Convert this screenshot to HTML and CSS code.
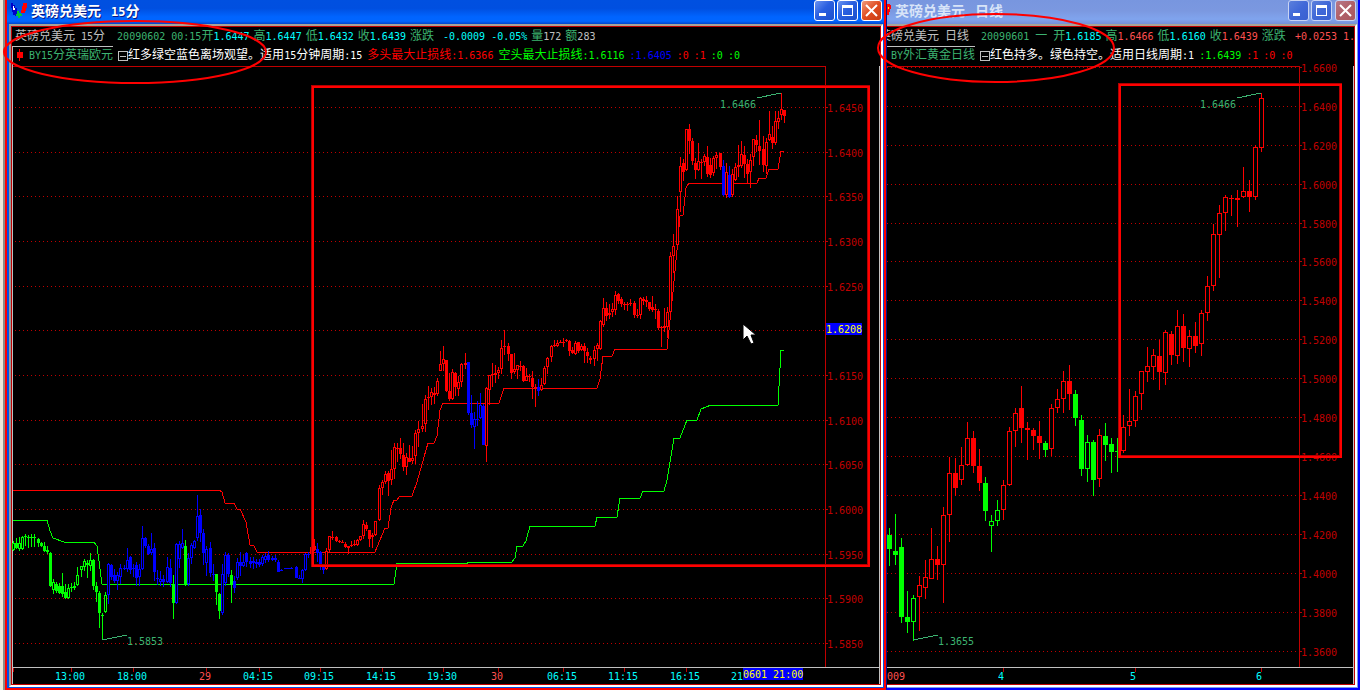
FILE: index.html
```html
<!DOCTYPE html>
<html lang="zh-CN">
<head>
<meta charset="utf-8">
<title>英磅兑美元</title>
<link rel="stylesheet" href="styles.css">
</head>
<body>
<main class="desktop">
  <div class="edge"></div>

  <section class="window window-active">
    <header class="titlebar">
      <svg class="app-icon" width="16" height="16" viewBox="0 0 16 16" shape-rendering="crispEdges">
        <path fill="#0000c8" d="M0 0h2v2h2v3h2v8H4v-1H2V9H1V5H0z"/>
        <path fill="#fff" d="M2 3h1v2h1v2H2zM11 4h1v2h2v2h-3z"/>
        <path fill="#f00" d="M12 0h2v-0h2v5h-1v3h-1v2h-4V7h1V3h1z"/>
        <path fill="#0c3" d="M6 8h2v2h2v1h1v2H9v2H7v-2H5v-2h1z"/>
      </svg>
      <h1 class="title"><span>英磅兑美元</span><span><span class="title-num">15</span>分</span></h1>
      <div class="controls">
        <button class="ctl" type="button" aria-label="最小化"><svg width="19" height="19" viewBox="0 0 19 19"><path fill="#fff" d="M4 12h7v3H4z"/></svg></button>
        <button class="ctl" type="button" aria-label="最大化"><svg width="19" height="19" viewBox="0 0 19 19"><path fill="#fff" fill-rule="evenodd" d="M4 4h11v11H4zM5 7v7h9V7z"/></svg></button>
        <button class="ctl ctl-close" type="button" aria-label="关闭"><svg width="19" height="19" viewBox="0 0 19 19"><path stroke="#fff" stroke-width="2" d="M4 4l11 11M15 4L4 15"/></svg></button>
      </div>
    </header>
    <div class="frame">
      <div class="row quote">
        <span class="silver">英磅兑美元<span class="n"> 15</span>分</span>
        <span class="sea after-name"><span class="n">20090602 00:15</span>开<span class="n cyan">1.6447</span></span>
        <span class="sea">高<span class="n cyan">1.6447</span></span>
        <span class="sea">低<span class="n cyan">1.6432</span></span>
        <span class="sea">收<span class="n cyan">1.6439</span></span>
        <span class="sea">涨跌</span>
        <span class="n cyan after-label">-0.0009 -0.05%</span>
        <span class="sea">量<span class="n silver">172</span></span>
        <span class="sea">额<span class="n silver">283</span></span>
      </div>
      <div class="row study">
        <button class="study-tab" type="button">
          <svg width="6" height="12" viewBox="0 0 6 12"><path fill="#f00" d="M0 3h6v6H0zM2 0h1v12H2z"/></svg>
          <span class="sea"><span class="n">BY15</span>分英瑞欧元</span>
        </button>
        <span class="fold"></span>
        <span class="white">红多绿空蓝色离场观望。适用<span class="n">15</span>分钟周期<span class="n">:15</span></span>
        <span class="red gap">多头最大止损线<span class="n">:1.6366</span></span>
        <span class="lime gap">空头最大止损线<span class="n">:1.6116</span></span>
        <span class="blue gap"><span class="n">:1.6405</span></span>
        <span class="red gap"><span class="n">:0</span></span>
        <span class="red gap"><span class="n">:1</span></span>
        <span class="lime gap"><span class="n">:0</span></span>
        <span class="lime gap"><span class="n">:0</span></span>
      </div>
      <div class="plot">
        <svg id="chart15" viewBox="13 66 866 618" preserveAspectRatio="xMinYMin meet"></svg>
      </div>
    </div>
  </section>

  <section class="window window-idle">
    <header class="titlebar">
      <svg class="app-icon app-icon-cut" width="4" height="16" viewBox="12 0 4 16" shape-rendering="crispEdges">
        <path fill="#f00" d="M12 1h3v1h1v4h-1v3h-1v3h-2z"/><path fill="#fe0" d="M13 4h1v2h-1z"/>
      </svg>
      <h2 class="title"><span>英磅兑美元</span><span>日线</span></h2>
      <div class="controls">
        <button class="ctl" type="button" aria-label="最小化"><svg width="19" height="19" viewBox="0 0 19 19"><path fill="#fff" d="M4 12h7v3H4z"/></svg></button>
        <button class="ctl" type="button" aria-label="最大化"><svg width="19" height="19" viewBox="0 0 19 19"><path fill="#fff" fill-rule="evenodd" d="M4 4h11v11H4zM5 7v7h9V7z"/></svg></button>
        <button class="ctl ctl-close" type="button" aria-label="关闭"><svg width="19" height="19" viewBox="0 0 19 19"><path stroke="#fff" stroke-width="2" d="M4 4l11 11M15 4L4 15"/></svg></button>
      </div>
    </header>
    <div class="frame">
      <div class="row quote quote-cut">
        <span class="silver">英磅兑美元<span class="n"> </span>日线</span>
        <span class="sea after-name"><span class="n">20090601 </span>一<span class="n"> </span>开<span class="n cyan">1.6185</span></span>
        <span class="sea">高<span class="n rose">1.6466</span></span>
        <span class="sea">低<span class="n cyan">1.6160</span></span>
        <span class="sea">收<span class="n rose">1.6439</span></span>
        <span class="sea">涨跌</span>
        <span class="n rose after-label">+0.0253 1.</span>
      </div>
      <div class="row study">
        <button class="study-tab" type="button"><span class="sea"><span class="n">BY</span>外汇黄金日线</span></button>
        <span class="fold"></span>
        <span class="white">红色持多。绿色持空。适用日线周期<span class="n">:1</span></span>
        <span class="lime gap"><span class="n">:1.6439</span></span>
        <span class="red gap"><span class="n">:1</span></span>
        <span class="red gap"><span class="n">:0</span></span>
        <span class="red gap"><span class="n">:0</span></span>
      </div>
      <div class="plot">
        <svg id="chartDay" viewBox="887 66 466 618" preserveAspectRatio="xMinYMin meet"></svg>
      </div>
    </div>
  </section>

  <svg class="marks" viewBox="0 0 1360 690" preserveAspectRatio="xMinYMin meet" aria-hidden="true">
    <g fill="none" stroke="#f00" stroke-width="2">
      <ellipse cx="135" cy="52" rx="131" ry="31"/>
      <ellipse cx="996" cy="48" rx="118" ry="34"/>
    </g>
    <g fill="none" stroke="#b00000" stroke-width="3" shape-rendering="crispEdges">
      <rect x="312" y="86" width="556" height="479"/>
      <rect x="1119" y="84" width="221" height="372"/>
    </g>
    <g fill="none" stroke="#f00" stroke-width="2" shape-rendering="crispEdges">
      <rect x="313" y="87" width="556" height="479"/>
      <rect x="1120" y="85" width="221" height="372"/>
    </g>
    <path fill="#fff" stroke="#000" stroke-width="1" d="M743 324v16l4-4 4 8 3-1-3-8h5z"/>
  </svg>
</main>
<script src="chart.js"></script>
</body>
</html>
```
FILE: styles.css
```css
* { box-sizing: border-box; }

body {
  margin: 0;
  background: #000;
  font-family: "Noto Sans CJK SC", "Noto Sans", sans-serif;
  font-size: 12px;
  overflow: hidden;
}

.desktop {
  position: relative;
  display: grid;
  grid-template-columns: 5px 881fr 474fr;
  height: 100vh;
}

.edge {
  background: #ece9d8;
  border-right: 2px solid #8c8c86;
}

.window {
  display: flex;
  flex-direction: column;
  min-width: 0;
  min-height: 0;
}

.window-active {
  background: #0050e6;
  border: solid #f00;
  border-width: 0 2px 2px;
}

.window-idle {
  background: #7b9ae3;
  border: solid #00f;
  border-width: 0 2px 2px 0;
  border-left: 1px solid #001090;
}

.titlebar {
  display: flex;
  align-items: flex-start;
  flex: none;
  height: 24px;
  padding: 0 2px 0 4px;
  background: linear-gradient(#0050e0 0, #004fe0 35%, #0064ff 70%, #0066ff 88%, #0046cc 100%);
}

.window-idle .titlebar {
  padding: 0 2px 0 0;
  background: linear-gradient(#7896df 0, #7b98e0 45%, #80a4ee 80%, #7590d8 100%);
}

.app-icon { margin: 3px 4px 0 0; }
.app-icon-cut { margin-right: 4px; }

.title {
  display: flex;
  gap: 10px;
  margin: 0;
  font-size: 14px;
  line-height: 20px;
  font-weight: 700;
  color: #fff;
  text-shadow: 1px 1px 0 #0a1883;
  white-space: nowrap;
}

.window-idle .title {
  color: #d8e4f8;
  text-shadow: none;
}

.title-num {
  font-family: "DejaVu Sans Mono", monospace;
  font-size: 12px;
}

.controls {
  display: flex;
  gap: 2px;
  margin-left: auto;
}

.ctl {
  width: 21px;
  height: 21px;
  padding: 0;
  border: 1px solid #fff;
  border-radius: 3px;
  background: linear-gradient(135deg, #6c94f0, #2a5fe0 45%, #1c50cc);
  line-height: 0;
}

.ctl-close {
  background: linear-gradient(135deg, #f09a7c, #e04c20 50%, #c83c14);
  margin-left: 1px;
}

.window-idle .ctl {
  border-color: #c8d4f4;
  background: linear-gradient(135deg, #5c80dc, #4068d8 50%, #3a60d0);
}

.window-idle .ctl-close { background: linear-gradient(135deg, #b87888, #b06068 50%, #a85860); }

.frame {
  display: flex;
  flex-direction: column;
  flex: 1;
  min-height: 0;
  margin: 0 1px 1px 2px;
  border: 2px solid #fff;
  border-top-color: #a8a498;
  border-left-color: #9a9a96;
  background: #000;
  box-shadow: inset 0 0 0 1px #c00000;
  padding: 1px;
  overflow: hidden;
}

.window-idle .frame {
  margin-left: 0;
  border-left: 0;
  padding-left: 0;
  box-shadow: inset -1px 0 #c00000, inset 0 1px #c00000, inset 0 -1px #c00000;
}

.row {
  display: flex;
  flex: none;
  line-height: 16px;
  white-space: pre;
}

.quote {
  align-items: baseline;
  height: 19px;
  gap: 4px;
  padding-left: 3px;
}

.quote-cut {
  padding-left: 0;
  margin-left: -8px;
}

.study {
  align-items: flex-start;
  height: 20px;
  border-left: 1px solid #c0c0c0;
}

.window-idle .study { border-left: 0; }

.after-name { margin-left: 8px; }
.after-label { margin-left: 5px; }
.gap { margin-left: 5px; }

.study-tab {
  display: flex;
  align-items: center;
  gap: 6px;
  height: 17px;
  padding: 0 0 0 4px;
  border: 0;
  border-top: 1px solid #c0c0c0;
  background: none;
  font: inherit;
  line-height: 16px;
  white-space: pre;
}

.fold {
  width: 10px;
  height: 10px;
  margin: 5px 0 0 5px;
  border: 1px solid #c0c0c0;
  background: linear-gradient(#c0c0c0, #c0c0c0) center / 6px 1px no-repeat;
}

.n {
  font-family: "DejaVu Sans Mono", "Liberation Mono", monospace;
  font-size: 10px;
}

.silver { color: #c0c0c0; }
.sea { color: #3cb371; }
.cyan { color: #0ff; }
.white { color: #fff; }
.red { color: #f00; }
.rose { color: #ff5050; }
.lime { color: #0f0; }
.blue { color: #00f; }

.plot {
  flex: 1;
  min-height: 0;
  border: solid #c0c0c0;
  border-width: 0 1px;
}

.window-idle .plot { border-left: 0; }

.plot svg {
  display: block;
  width: 100%;
  height: 100%;
  overflow: visible;
}

.plot text {
  font-family: "DejaVu Sans Mono", "Liberation Mono", monospace;
  font-size: 10px;
}

.marks {
  position: absolute;
  inset: 0;
  width: 100%;
  height: 100%;
  pointer-events: none;
}
```
FILE: chart.js
```js
// Candle record: x high bodyTop bodyBottom low kind
// kind: R/G/B = solid red/green/blue, r/g/b = hollow.
const COLORS = { r: "#f00", g: "#0f0", b: "#00f" };

const m15 = `13 541 543 550 551 g,16 538 543 548 549 G,19 537 543 549 551 g,22 536 537 549 550 g,25 534 536 537 546 G,28 535 537 538 548 G,31 534 537 538 547 G,34 534 537 538 547 G,38 538 539 543 547 G,41 542 543 546 547 G,44 542 546 551 552 G,47 546 550 552 554 G,50 552 553 586 587 G,53 579 582 590 594 g,56 582 584 591 593 G,59 583 586 593 594 G,62 573 586 594 597 G,65 584 592 598 599 G,68 584 588 598 599 g,71 583 587 588 592 G,74 582 586 588 590 G,77 567 575 585 586 g,81 566 566 570 577 g,84 559 561 567 571 g,87 560 563 565 578 G,90 553 560 566 571 g,93 559 560 586 590 G,96 582 586 592 602 G,99 591 593 613 628 G,102 613 615 616 640 G,105 592 595 612 613 g,
108 563 564 595 604 b,111 564 565 577 580 B,114 569 575 581 583 B,117 572 575 581 590 b,120 564 568 577 584 b,124 565 568 569 570 B,127 548 560 569 572 b,130 556 557 570 574 B,133 564 568 569 577 B,136 562 565 578 586 B,139 564 569 577 586 b,142 526 538 569 570 b,145 537 538 546 548 B,148 544 546 554 555 B,151 533 549 553 555 b,154 543 548 572 581 B,157 570 578 579 585 B,160 571 579 582 586 b,163 575 579 582 587 B,167 557 567 582 583 b,170 559 568 583 587 B,173 575 584 603 619 G,176 543 544 603 604 b,179 541 544 559 568 b,182 529 543 548 549 b,185 540 546 585 586 G,188 553 558 584 586 b,191 543 545 558 564 b,194 540 541 548 549 b,197 495 516 538 541 b,200 509 515 533 542 B,203 529 533 553 565 B,206 546 549 563 576 b,210 542 548 573 577 B,213 564 574 575 581 B,216 574 574 592 605 G,219 593 594 611 619 G,222 564 574 613 615 b,225 552 555 583 586 b,228 553 555 574 577 B,231 570 575 584 603 G,234 576 581 588 593 B,237 558 562 578 580 b,240 552 562 566 576 B,243 555 562 566 567 b,246 552 553 562 567 B,250 557 561 564 568 B,253 557 561 563 569 B,256 559 562 564 568 B,259 559 562 565 567 B,262 555 557 564 566 b,265 553 556 560 563 b,268 551 555 560 562 B,272 556 558 560 561 B,275 555 558 560 562 B,278 560 562 572 572 B,281 569 570 571 571 B,285 568 568 569 569 B,288 568 568 569 569 B,291 567 568 569 569 B,296 566 567 578 578 B,299 575 578 579 579 B,302 569 570 579 583 b,305 553 554 570 571 b,308 552 554 555 558 B,
311 537 547 554 555 r,314 539 546 550 551 R,317 543 549 553 562 B,320 551 552 566 570 B,323 564 566 570 574 B,326 548 551 569 570 r,329 536 536 550 552 r,332 531 537 538 540 R,336 536 537 541 542 R,339 540 541 542 543 R,342 540 542 543 543 R,345 542 544 547 548 R,348 546 546 548 554 R,351 541 545 546 547 R,354 540 544 545 546 R,357 539 540 545 546 r,360 536 536 540 541 r,363 520 524 536 539 r,366 522 525 529 531 R,369 530 530 539 547 R,372 533 535 537 548 r,375 521 521 535 536 r,379 485 488 520 521 r,382 480 482 488 495 r,385 471 474 482 484 r,388 471 473 481 496 R,391 450 469 480 485 r,394 443 447 469 479 r,397 443 448 449 462 R,400 438 448 454 459 R,403 443 455 467 471 R,406 453 457 467 475 r,409 445 458 462 462 R,412 446 458 461 464 r,415 430 433 456 464 r,418 421 429 433 447 r,422 404 426 429 432 r,425 395 399 424 432 r,428 386 397 398 410 R,431 388 392 397 405 r,434 387 393 395 404 R,437 378 381 394 396 r,440 351 364 371 371 r,443 346 359 364 371 r,446 360 360 391 392 R,449 373 391 399 401 R,452 369 372 399 400 r,455 372 373 387 396 R,458 376 382 389 396 r,461 363 364 382 387 r,465 353 363 365 369 R,
468 362 362 413 415 B,471 395 413 425 428 B,474 412 419 427 449 b,477 401 419 420 426 B,480 393 405 418 419 b,483 404 406 445 445 B,486 387 388 446 462 r,489 375 375 390 405 r,492 363 374 375 387 R,495 365 373 375 383 R,498 367 370 373 379 r,501 340 348 369 374 r,504 330 346 347 355 R,508 343 346 354 361 R,511 354 354 373 379 R,514 353 369 372 374 r,517 365 365 370 379 r,520 361 366 367 371 R,523 365 366 381 382 R,526 368 376 381 381 r,529 374 376 377 382 R,532 371 378 387 399 R,535 384 387 388 407 R,538 379 387 391 396 B,541 378 385 390 391 r,544 366 368 384 385 r,547 357 358 367 374 r,551 345 346 357 362 r,554 340 345 346 347 R,557 340 343 346 347 r,560 340 342 343 343 R,563 338 342 343 347 R,566 339 340 341 342 R,569 340 341 351 356 R,572 347 350 353 354 R,575 341 343 354 355 r,578 342 342 351 353 R,581 344 346 350 351 r,584 343 346 351 363 R,587 348 352 356 363 R,590 356 358 360 364 R,594 346 350 359 366 r,597 343 345 349 361 r,
600 320 321 349 350 r,603 298 308 325 327 r,606 302 308 316 321 R,609 304 313 315 319 R,612 303 309 312 317 r,615 291 295 310 315 r,618 293 294 301 304 R,621 297 299 304 307 R,624 302 304 305 310 R,627 302 304 305 311 R,630 299 303 304 306 R,634 301 303 315 318 R,637 309 315 316 318 R,640 297 298 315 319 r,643 297 299 301 305 R,646 296 300 302 307 R,649 302 302 309 311 R,652 296 307 310 312 R,655 304 309 310 319 R,658 309 311 328 330 R,661 326 327 328 347 R,664 308 326 328 332 R,667 307 312 327 338 r,670 252 256 312 320 r,673 234 246 256 273 r,677 196 209 245 249 r,680 157 166 192 212 r,683 159 163 172 181 R,686 129 129 170 171 r,689 124 129 141 154 R,692 138 141 161 165 R,695 158 163 170 179 R,698 143 161 170 171 r,701 159 162 163 179 R,704 154 156 162 166 r,707 146 157 174 177 R,710 158 165 175 178 R,713 156 158 173 176 r,716 152 155 158 169 r,720 153 153 167 170 R,723 160 166 195 196 B,726 163 172 195 198 r,729 166 175 197 198 B,732 169 174 195 197 r,735 163 167 180 181 r,738 145 165 167 177 r,741 141 154 166 168 r,744 146 155 164 178 R,747 159 164 174 183 R,750 154 160 172 188 r,753 139 139 157 166 r,756 135 140 145 152 R,759 120 146 151 165 R,763 136 149 165 172 R,766 138 142 166 174 r,769 111 134 140 141 r,772 126 137 143 149 R,775 111 121 143 145 r,778 111 118 122 129 r,781 93 109 115 120 r,784 110 110 116 123 R`;

const day = `889 528 535 549 566 G,895 514 551 555 565 G,901 538 547 617 623 G,907 591 617 622 633 G,913 595 598 622 641 g,919 576 585 597 631 r,925 560 577 588 599 r,931 528 559 579 579 r,937 546 559 565 580 R,943 507 515 565 603 r,949 457 473 515 542 r,955 458 473 488 496 R,961 447 465 480 485 r,967 422 438 465 466 r,973 431 438 466 473 R,979 449 466 483 491 R,985 477 483 511 521 G,991 515 521 526 552 g,997 500 510 521 526 g,1003 480 485 510 520 r,1009 427 431 485 486 r,1015 408 413 431 447 r,1021 386 408 428 443 R,1027 422 428 430 460 R,1033 428 430 436 450 R,1039 421 436 443 459 R,1045 441 443 450 457 G,1051 404 408 449 456 r,1057 389 399 408 413 r,1063 371 381 399 413 r,1069 365 381 394 410 R,1075 390 394 418 426 G,1081 415 420 469 476 G,1087 435 442 469 482 g,1093 440 442 480 496 G,1099 429 435 479 487 r,1105 423 436 445 461 G,1111 438 444 452 473 G,1117 438 451 452 472 G,
1123 415 427 451 453 r,1129 389 421 426 436 r,1135 391 396 421 427 r,1141 371 371 394 410 r,1147 347 366 372 382 r,1153 349 355 367 380 r,1159 340 356 372 390 R,1165 330 332 373 385 r,1171 331 334 355 365 R,1177 310 326 356 364 r,1183 314 326 348 362 R,1189 330 336 349 367 r,1195 322 336 346 353 R,1201 310 313 344 356 r,1207 276 286 313 321 r,1213 224 234 286 291 r,1219 205 213 235 278 r,1225 195 197 213 231 r,1231 195 198 199 216 R,1237 190 198 200 227 R,1243 167 191 197 198 r,1249 180 191 197 212 R,1255 145 147 197 200 r,1261 93 98 148 152 r`;

const upperStop = "13,490 219,490 222,492 225,503 234,503 237,509 240,509 246,522 250,545 254,546 257,552 375,552 385,528 388,528 391,508 394,500 397,500 400,496 412,496 417,482 428,443 434,443 437,436 440,410 443,403 499,403 501,397 504,388 597,388 600,379 603,356 612,356 615,349 667,349 669,330 673,292 677,250 680,216 683,215 686,188 689,183 757,183 759,178 766,178 769,169 778,169 781,151 784,151";
const lowerStop = "13,520 47,520 50,531 53,538 64,542 94,542 97,546 102,584 394,584 397,563 467,563 467,562 512,562 515,558 517,546 523,546 526,541 530,526 595,526 597,517 617,517 620,498 640,498 643,491 664,491 667,480 674,438 680,438 687,420 697,420 701,409 711,405 778,405 781,350 784,350";

const rect = (x, y, w, h, fill) => `<rect x="${x}" y="${y}" width="${w}" height="${h}" fill="${fill}"/>`;
const text = (x, y, s, fill) => `<text x="${x}" y="${y}" fill="${fill}">${s}</text>`;

function candles(data, half) {
  return data.split(",").map((record) => {
    const f = record.trim().split(" ");
    const [x, high, top, bottom, low] = f.slice(0, 5).map(Number);
    const color = COLORS[f[5].toLowerCase()];
    const h = Math.max(bottom - top, 1);
    let out = rect(x, high, 1, Math.max(low - high, 1), color)
      + rect(x - half, top, 2 * half + 1, h, color);
    if (f[5] === f[5].toLowerCase() && h > 2) {
      out += rect(x - half + 1, top + 1, 2 * half - 1, h - 2, "#000");
    }
    return out;
  }).join("");
}

function line(points, color) {
  return `<polyline points="${points}" fill="none" stroke="${color}"/>`;
}

function draw(id, c) {
  let out = `<g shape-rendering="crispEdges">`;
  c.prices.forEach(([y]) => {
    out += `<path d="M${c.dots} ${y}H${c.axis}" stroke="#c00000" stroke-dasharray="1 3"/>`;
    out += rect(c.axis, y, 3, 1, "#c00000");
  });
  out += rect(c.left, 66, c.axis - c.left, 1, "#c00000") + rect(c.axis, 66, 1, 601, "#c00000");
  out += rect(c.left, 667, c.right - c.left, 1, "#c0c0c0");
  c.times.forEach(([tick]) => { if (tick) out += rect(tick, 668, 1, 4, "#c00000"); });
  c.stops.forEach(([points, color]) => { out += line(points, color); });
  out += candles(c.data, c.half);
  c.peaks.forEach((p) => { out += line(p.leader, "#3cb371"); });
  out += "</g>";
  c.prices.forEach(([y, label]) => { if (label) out += text(c.axis + 2, y + 5, label, "#c00000"); });
  c.times.forEach(([, x, label, color]) => { if (label) out += text(x, 680, label, color || "#0ff"); });
  c.peaks.forEach((p) => { out += text(p.x, p.y, p.label, "#3cb371"); });
  (c.tags || []).forEach((t) => { out += rect(t.x, t.y, t.w, 12, "#00f") + text(t.x, t.y + 10, t.label, "#ff0"); });
  document.getElementById(id).innerHTML = out;
}

draw("chart15", {
  left: 13, right: 879, axis: 825, dots: 15, half: 1, data: m15,
  prices: [[107, "1.6450"], [152, "1.6400"], [196, "1.6350"], [241, "1.6300"], [286, "1.6250"], [330, ""], [375, "1.6150"], [420, "1.6100"], [464, "1.6050"], [509, "1.6000"], [554, "1.5950"], [598, "1.5900"], [643, "1.5850"]],
  times: [[13, 0, ""], [71, 55, "13:00"], [133, 117, "18:00"], [206, 199, "29", "#ff5050"], [259, 243, "04:15"], [320, 304, "09:15"], [382, 366, "14:15"], [443, 427, "19:30"], [498, 491, "30", "#ff5050"], [563, 547, "06:15"], [624, 608, "11:15"], [686, 670, "16:15"], [0, 731, "21"]],
  stops: [[lowerStop, "#0f0"], [upperStop, "#f00"]],
  peaks: [{ leader: "757,98 781,93", x: 720, y: 108, label: "1.6466" }, { leader: "102,640 127,635", x: 127, y: 645, label: "1.5853" }],
  tags: [{ x: 826, y: 323, w: 36, label: "1.6208" }, { x: 743, y: 668, w: 60, label: "0601 21:00" }]
});

draw("chartDay", {
  left: 887, right: 1353, axis: 1299, dots: 887, half: 2, data: day,
  prices: [[67, "1.6600"], [106, "1.6400"], [145, "1.6200"], [184, "1.6000"], [223, "1.5800"], [261, "1.5600"], [300, "1.5400"], [339, "1.5200"], [378, "1.5000"], [417, "1.4800"], [456, "1.4600"], [495, "1.4400"], [534, "1.4200"], [573, "1.4000"], [612, "1.3800"], [651, "1.3600"]],
  times: [[0, 887, "009", "#ff5050"], [1003, 998, "4"], [1135, 1130, "5"], [1261, 1256, "6"]],
  stops: [],
  peaks: [{ leader: "1237,98 1261,93", x: 1200, y: 108, label: "1.6466" }, { leader: "913,640 938,635", x: 938, y: 645, label: "1.3655" }]
});
```
